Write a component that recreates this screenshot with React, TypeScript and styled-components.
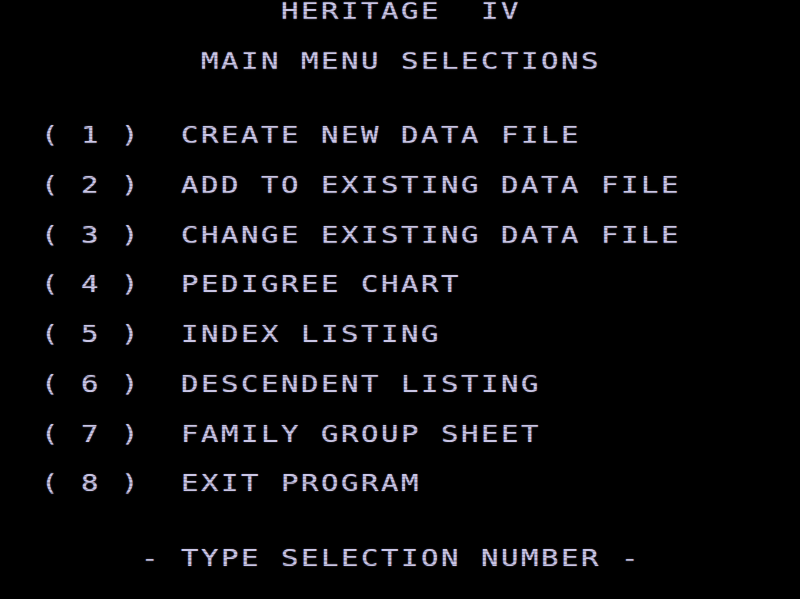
import React from "react";
import styled, { createGlobalStyle } from "styled-components";

const Global = createGlobalStyle`
  html, body {
    margin: 0;
    padding: 0;
    background: #000;
  }
`;

// 40 x 24 text-mode screen: every cell is 20px wide, every row ~24.9px tall
const Screen = styled.div`
  position: relative;
  width: 800px;
  height: 599px;
  background: #000;
  display: grid;
  grid-template-rows: repeat(24, 24.86px);
  align-content: start;
  padding-left: 1px;
  box-sizing: border-box;
  overflow: hidden;
`;

const Line = styled.div`
  font-family: "DejaVu Sans Mono", "Liberation Mono", monospace;
  font-size: 29px;
  letter-spacing: 2.54px;
  line-height: 21px;
  white-space: pre;
  color: #cac6e6;
  text-shadow: 0 0 1.5px rgba(190, 186, 230, 0.65);
  transform: scaleY(0.82);
  transform-origin: 0 50%;
`;

// faint raster lines of the monitor
const Scanlines = styled.div`
  position: absolute;
  inset: 0;
  pointer-events: none;
  background: repeating-linear-gradient(
    to bottom,
    transparent 0px,
    transparent 2px,
    rgba(0, 0, 0, 0.2) 2px,
    rgba(0, 0, 0, 0.2) 3.12px
  );
`;

const menu = [
  "CREATE NEW DATA FILE",
  "ADD TO EXISTING DATA FILE",
  "CHANGE EXISTING DATA FILE",
  "PEDIGREE CHART",
  "INDEX LISTING",
  "DESCENDENT LISTING",
  "FAMILY GROUP SHEET",
  "EXIT PROGRAM",
];

function buildRows(): string[] {
  const rows: string[] = Array.from({ length: 24 }, () => "");
  rows[0] = "              HERITAGE  IV";
  rows[2] = "          MAIN MENU SELECTIONS";
  menu.forEach((label, i) => {
    rows[5 + i * 2] = `  ( ${i + 1} )  ${label}`;
  });
  rows[22] = "       - TYPE SELECTION NUMBER -";
  return rows;
}

export default function App() {
  const rows = buildRows();
  return (
    <>
      <Global />
      <Screen>
        {rows.map((text, i) => (
          <Line key={i}>{text || " "}</Line>
        ))}
        <Scanlines />
      </Screen>
    </>
  );
}
